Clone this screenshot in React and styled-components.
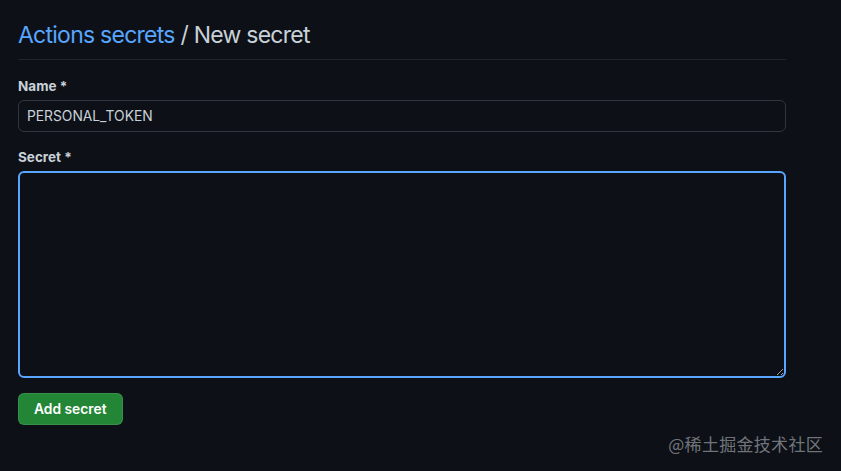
import React from "react";
import styled, { createGlobalStyle } from "styled-components";

const Global = createGlobalStyle`
  html, body { margin: 0; padding: 0; background: #0d1117; }
  body { font-family: Inter, "Liberation Sans", Arial, sans-serif; color: #c9d1d9; }
  * { box-sizing: border-box; }
`;

const Page = styled.div`
  position: relative;
  width: 841px;
  height: 471px;
  background: #0d1117;
  padding: 20px 55px 0 18px;
`;

const Subhead = styled.div`
  border-bottom: 1px solid #21262d;
  padding-bottom: 9px;
  margin-bottom: 16px;
`;

const Title = styled.h2`
  margin: 0;
  font-size: 23px;
  font-weight: 400;
  line-height: 30px;
  color: #c9d1d9;
  letter-spacing: -0.75px;
`;

const Crumb = styled.a`
  color: #58a6ff;
  text-decoration: none;
`;

const Form = styled.form`
  display: flex;
  flex-direction: column;
`;

const Field = styled.div`
  display: flex;
  flex-direction: column;
  gap: 4px;
  margin-bottom: 15px;
`;

const Label = styled.label`
  font-size: 13.5px;
  font-weight: 700;
  line-height: 20px;
  color: #c9d1d9;
`;

const Input = styled.input`
  height: 32px;
  padding: 5px 8px;
  font-family: inherit;
  font-size: 13.8px;
  color: #c9d1d9;
  background: #0d1117;
  border: 1px solid #30363d;
  border-radius: 6px;
  outline: none;
`;

const TextArea = styled.textarea`
  height: 207px;
  padding: 8px;
  font-family: inherit;
  font-size: 14px;
  color: #c9d1d9;
  background: #0d1117;
  border: 2px solid #58a6ff;
  border-radius: 6px;
  outline: none;
  resize: vertical;
`;

const Button = styled.button`
  align-self: flex-start;
  height: 32px;
  padding: 0 15px;
  font-family: inherit;
  font-size: 13.8px;
  font-weight: 600;
  color: #ffffff;
  background: #238636;
  border: 1px solid rgba(240, 246, 252, 0.1);
  border-radius: 6px;
  cursor: pointer;
`;

const Watermark = styled.div`
  position: absolute;
  right: 18px;
  bottom: 16px;
  font-family: "Noto Sans CJK SC", "Noto Sans", sans-serif;
  font-size: 17px;
  line-height: 22px;
  color: rgba(200, 205, 210, 0.55);
  letter-spacing: 0.3px;
`;

export default function App() {
  return (
    <Page>
      <Global />
      <Subhead>
        <Title>
          <Crumb href="#">Actions secrets</Crumb> / New secret
        </Title>
      </Subhead>
      <Form onSubmit={(e) => e.preventDefault()}>
        <Field>
          <Label>Name *</Label>
          <Input defaultValue="PERSONAL_TOKEN" />
        </Field>
        <Field>
          <Label>Secret *</Label>
          <TextArea />
        </Field>
        <Button type="submit">Add secret</Button>
      </Form>
      <Watermark>@稀土掘金技术社区</Watermark>
    </Page>
  );
}
